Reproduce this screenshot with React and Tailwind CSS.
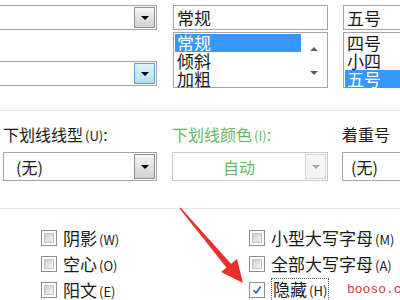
const topStyles = ["常规", "倾斜", "加粗"];
const topSizes = ["四号", "小四", "五号"];

function Triangle({ up, color = "border-t-black" }) {
  return (
    <span
      className={`h-0 w-0 border-x-[4px] border-x-transparent ${
        up ? "border-b-[4px] border-b-[#606060]" : `border-t-[4px] ${color}`
      }`}
    />
  );
}

function ArrowBtn({ variant = "normal" }) {
  const look = {
    normal: "border-[#8e8f8f] bg-linear-to-b from-[#f4f4f4] to-[#d2d2d2]",
    hot: "border-[#5b9fd4] bg-linear-to-b from-[#e3f3fd] to-[#b4dcf5]",
    off: "border-[#d3d3d3] bg-[#f4f4f4]",
  }[variant];

  return (
    <div className={`my-[1px] mr-[1px] flex w-[21px] items-center justify-center border ${look}`}>
      <Triangle color={variant === "off" ? "border-t-[#a8a8a8]" : "border-t-black"} />
    </div>
  );
}

function Combo({ className = "", variant, children, center, textClass = "" }) {
  return (
    <div className={`flex border ${variant === "off" ? "border-[#c9c9c9]" : "border-[#a3a3a3]"} bg-white ${className}`}>
      <div className={`flex flex-1 items-center ${center ? "justify-center" : "pl-[12px]"} text-[16px] ${textClass}`}>
        {children}
      </div>
      <ArrowBtn variant={variant} />
    </div>
  );
}

function ListBox({ items, selected, scroll }) {
  return (
    <div className="mt-[2px] flex h-[56px] border border-[#a5a5a5] bg-white">
      <div className="flex-1 pt-[1px] pl-[1px] text-[17px] leading-[18px]">
        {items.map((item, i) => (
          <div
            key={item}
            className={`h-[18px] pl-[2px] ${i === selected ? "bg-[#3399ff] text-white" : "text-[#1a1a1a]"}`}
          >
            {item}
          </div>
        ))}
      </div>
      {scroll ? (
        <div className="flex w-[26px] flex-col items-center justify-between pt-[14px] pb-[12px]">
          <Triangle up />
          <Triangle color="border-t-[#606060]" />
        </div>
      ) : null}
    </div>
  );
}

function Check({ checked }) {
  return (
    <div className="h-[16px] w-[16px] shrink-0 border border-[#8f8f8f] bg-white p-[2px]">
      {checked ? (
        <svg viewBox="0 0 10 10" className="h-full w-full">
          <path d="M1.5 5.2 L4 8 L8.8 1.6" fill="none" stroke="#2b5fb4" strokeWidth="1.6" />
        </svg>
      ) : (
        <div className="h-full w-full border border-[#c4c4c4] bg-linear-to-br from-[#cdcdcd] to-[#f5f5f5]" />
      )}
    </div>
  );
}

function CheckRow({ label, keyHint, checked, focus }) {
  return (
    <div className="flex h-[26px] items-center gap-[6px] whitespace-nowrap">
      <Check checked={checked} />
      <span className={`text-[#1a1a1a] ${focus ? "border border-dotted border-[#555] px-[1px] leading-[20px]" : ""}`}>
        <span className="text-[17px]">{label}</span>
        <span className="ml-[2px] text-[13px]">({keyHint})</span>
      </span>
    </div>
  );
}

export default function App() {
  return (
    <div className="relative h-[300px] w-[400px] overflow-hidden bg-white font-['Noto_Sans_CJK_SC',sans-serif] text-[#1a1a1a]">
      <div className="flex pt-[5px]">
        <div className="-ml-[10px] flex w-[167px] shrink-0 flex-col">
          <Combo className="h-[25px]" />
          <Combo className="mt-[31px] h-[25px]" variant="hot" />
        </div>
        <div className="ml-[16px] w-[155px] shrink-0">
          <div className="h-[25px] border border-[#a5a5a5] pl-[3px] text-[17px] leading-[23px]">常规</div>
          <ListBox items={topStyles} selected={0} scroll />
        </div>
        <div className="ml-[15px] w-[90px] shrink-0">
          <div className="h-[25px] border border-[#a5a5a5] pl-[3px] text-[17px] leading-[23px]">五号</div>
          <ListBox items={topSizes} selected={2} />
        </div>
      </div>

      <div className="mt-[22px] h-px bg-[#e3e3e3]" />

      <div className="mt-[13px] flex">
        <div className="ml-[3px] w-[154px] shrink-0">
          <div className="h-[20px] whitespace-nowrap text-[16px] leading-[20px]">
            下划线线型<span className="ml-[2px] text-[13px]">(U)</span>:
          </div>
          <Combo className="mt-[8px] h-[29px]">(无)</Combo>
        </div>
        <div className="ml-[15px] w-[156px] shrink-0">
          <div className="h-[20px] whitespace-nowrap text-[16px] leading-[20px] text-[#66b866]">
            下划线颜色<span className="ml-[2px] text-[13px]">(I)</span>:
          </div>
          <Combo className="mt-[8px] h-[29px]" variant="off" center textClass="text-[#66b866]">
            自动
          </Combo>
        </div>
        <div className="ml-[14px] w-[90px] shrink-0">
          <div className="h-[20px] whitespace-nowrap text-[16px] leading-[20px]">着重号</div>
          <div className="mt-[8px] flex h-[29px] items-center border border-[#a3a3a3] pl-[8px] text-[16px]">(无)</div>
        </div>
      </div>

      <div className="mt-[27px] h-px bg-[#e3e3e3]" />

      <div className="mt-[16px] flex">
        <div className="ml-[41px] w-[208px] shrink-0">
          <CheckRow label="阴影" keyHint="W" />
          <CheckRow label="空心" keyHint="O" />
          <CheckRow label="阳文" keyHint="E" />
        </div>
        <div className="shrink-0">
          <CheckRow label="小型大写字母" keyHint="M" />
          <CheckRow label="全部大写字母" keyHint="A" />
          <CheckRow label="隐藏" keyHint="H" checked focus />
        </div>
      </div>

      <svg className="pointer-events-none absolute left-0 top-0" width="400" height="300">
        <polygon points="180.5,207.5 179.5,208.5 226.7,267.9 231.3,264" fill="#e5322e" />
        <polygon points="243,283 221,272 237,259" fill="#e5322e" />
      </svg>

      <div className="absolute left-[347px] top-[283px] bg-white font-['Liberation_Mono',monospace] text-[13px] leading-[14px] text-[#d6343c]">
        booso.com
      </div>
    </div>
  );
}
